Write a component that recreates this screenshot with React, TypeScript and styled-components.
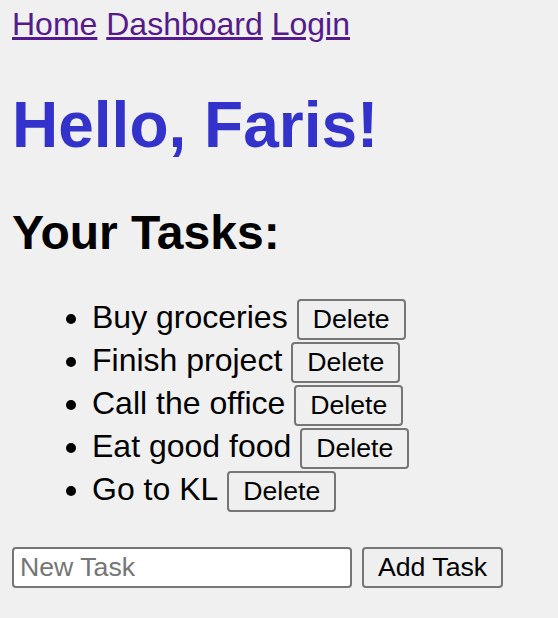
import React, { useState } from "react";
import styled, { createGlobalStyle } from "styled-components";

const GlobalStyle = createGlobalStyle`
  html, body {
    background: #f0f0f0;
  }
  body {
    margin: 0;
    padding: 6px 12px 0 12px;
    font-family: "Liberation Sans", Arial, sans-serif;
    font-size: 32px;
    color: #000;
  }
`;

const Nav = styled.nav`
  display: block;
  line-height: normal;
`;

const NavLink = styled.a`
  color: #551a8b;
  text-decoration: underline;
  cursor: pointer;
`;

const Title = styled.h1`
  color: #3333cc;
  font-size: 64px;
  font-weight: bold;
  margin: 45px 0 43px 0;
`;

const Subtitle = styled.h2`
  font-size: 48px;
  font-weight: bold;
  margin: 0 0 38px 0;
`;

const TaskList = styled.ul`
  margin: 0 0 34px 0;
  padding-left: 80px;
  list-style: disc;
`;

const TaskItem = styled.li`
  line-height: normal;
`;

const Button = styled.button`
  font-family: "Liberation Sans", Arial, sans-serif;
  font-size: 26.67px;
  color: #000;
  background: #efefef;
  border: 2px solid #767676;
  border-radius: 4px;
  height: 41px;
  padding: 0 14px;
  margin: 1px 0 1px 9px;
  box-sizing: border-box;
  cursor: pointer;
`;

const AddRow = styled.div`
  display: flex;
  align-items: center;
  gap: 10px;
`;

const TaskInput = styled.input`
  font-family: "Liberation Sans", Arial, sans-serif;
  font-size: 26.67px;
  width: 340px;
  height: 41px;
  box-sizing: border-box;
  padding: 0 6px;
  border: 2px solid #767676;
  border-radius: 4px;
  background: #fff;
  color: #000;
  &::placeholder {
    color: #757575;
  }
`;

const AddButton = styled(Button)`
  margin: 0;
`;

export default function App() {
  const [tasks, setTasks] = useState<string[]>([
    "Buy groceries",
    "Finish project",
    "Call the office",
    "Eat good food",
    "Go to KL",
  ]);
  const [text, setText] = useState("");

  return (
    <>
      <GlobalStyle />
      <Nav>
        <NavLink href="#">Home</NavLink> <NavLink href="#">Dashboard</NavLink>{" "}
        <NavLink href="#">Login</NavLink>
      </Nav>
      <Title>Hello, Faris!</Title>
      <Subtitle>Your Tasks:</Subtitle>
      <TaskList>
        {tasks.map((t, i) => (
          <TaskItem key={i}>
            {t}
            <Button onClick={() => setTasks(tasks.filter((_, j) => j !== i))}>Delete</Button>
          </TaskItem>
        ))}
      </TaskList>
      <AddRow>
        <TaskInput
          placeholder="New Task"
          value={text}
          onChange={(e) => setText(e.target.value)}
        />
        <AddButton
          onClick={() => {
            if (text.trim()) {
              setTasks([...tasks, text.trim()]);
              setText("");
            }
          }}
        >
          Add Task
        </AddButton>
      </AddRow>
    </>
  );
}
